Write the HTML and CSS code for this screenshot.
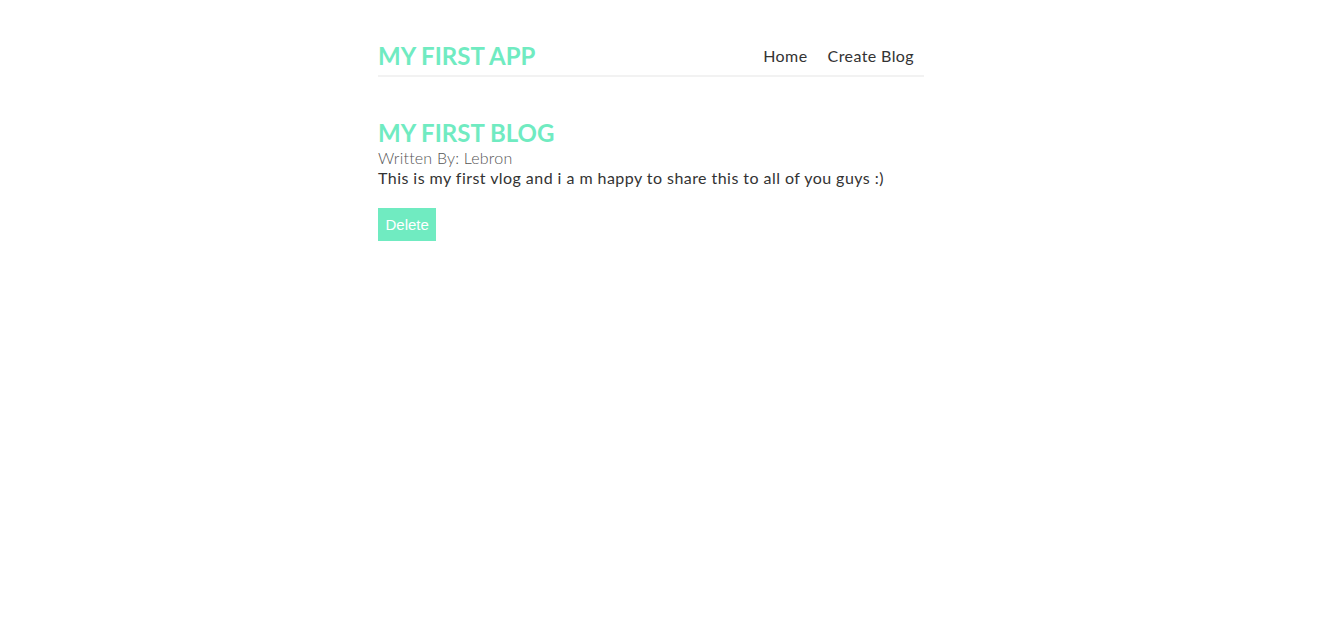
FILE: index.html
```html
<!DOCTYPE html>
<html lang="en">
<head>
<meta charset="utf-8">
<title>My First App</title>
<link rel="stylesheet" href="styles.css">
</head>
<body>
<div class="page">
  <nav class="navbar">
    <h1 class="brand">MY FIRST APP</h1>
    <div class="links">
      <a href="#">Home</a>
      <a href="#">Create Blog</a>
    </div>
  </nav>
  <main class="content">
    <article class="blog-details">
      <h2 class="blog-title">MY FIRST BLOG</h2>
      <p class="author">Written By: Lebron</p>
      <div class="body">This is my first vlog and i a m happy to share this to all of you guys :)</div>
      <button class="delete">Delete</button>
    </article>
  </main>
</div>
</body>
</html>
```
FILE: styles.css
```css
* {
  margin: 0;
  box-sizing: border-box;
}
body {
  margin: 0;
  font-family: "Lato", "Open Sans", sans-serif;
  color: #333;
}
.page {
  padding-right: 15px;
}
.navbar {
  width: 546px;
  margin: 0 auto;
  height: 77px;
  padding-top: 36px;
  display: flex;
  align-items: center;
  border-bottom: 2px solid #f2f2f2;
}
.brand {
  font-size: 24px;
  font-weight: 700;
  color: #70ebc1;
  line-height: 30px;
}
.links {
  margin-left: auto;
  padding-right: 4px;
}
.links a {
  text-decoration: none;
  color: #333;
  font-size: 16px;
  letter-spacing: 0.4px;
  margin-left: 4px;
  padding: 6px;
}
.content {
  width: 546px;
  margin: 41px auto;
}
.blog-title {
  font-size: 24px;
  font-weight: 700;
  color: #70ebc1;
  line-height: 30px;
}
.author {
  font-size: 16px;
  font-weight: 300;
  color: #555;
  letter-spacing: 0.2px;
  line-height: 20px;
}
.body {
  font-size: 16px;
  line-height: 20px;
  letter-spacing: 0.45px;
  color: #333;
}
.delete {
  margin-top: 20px;
  background: #70ebc1;
  color: #fff;
  border: 0;
  padding: 8px 7.5px;
  font-family: "Liberation Sans", Arial, sans-serif;
  font-size: 15px;
  cursor: pointer;
}
```
